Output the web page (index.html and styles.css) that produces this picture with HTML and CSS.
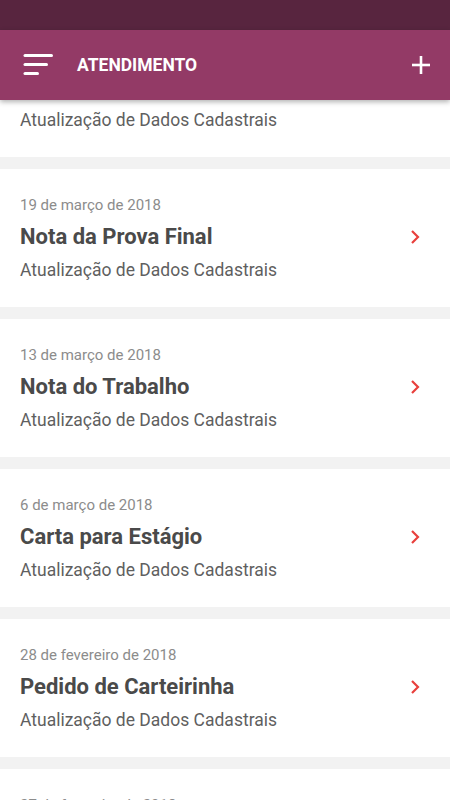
FILE: index.html
```html
<!DOCTYPE html>
<html lang="pt-BR">
<head>
    <meta charset="UTF-8">
    <meta name="viewport" content="width=device-width, initial-scale=1.0">
    <title>Atendimento</title>
    <link rel="stylesheet" href="styles.css">
</head>
<body>
    <!-- Barra de status -->
    <div class="status-bar"></div>

    <!-- Barra superior -->
    <div class="toolbar">
        <svg class="menu-icon" width="32" height="24" viewBox="0 0 32 24">
            <line x1="2" y1="2.5" x2="28.5" y2="2.5" />
            <line x1="2" y1="11.5" x2="23.5" y2="11.5" />
            <line x1="2" y1="20.5" x2="14.5" y2="20.5" />
        </svg>
        <h1>ATENDIMENTO</h1>
        <svg class="add-icon" width="20" height="20" viewBox="0 0 20 20">
            <line x1="10" y1="1" x2="10" y2="19" />
            <line x1="1" y1="10" x2="19" y2="10" />
        </svg>
    </div>

    <!-- Lista de solicitações -->
    <div class="content">
        <div class="list">
            <div class="card">
                <p class="date">20 de março de 2018</p>
                <div class="row">
                    <h2>Declaração de Matrícula</h2>
                    <svg class="chevron" width="10" height="16" viewBox="0 0 10 16"><polyline points="2,2 8,8 2,14" /></svg>
                </div>
                <p class="subject">Atualização de Dados Cadastrais</p>
            </div>
            <div class="card">
                <p class="date">19 de março de 2018</p>
                <div class="row">
                    <h2>Nota da Prova Final</h2>
                    <svg class="chevron" width="10" height="16" viewBox="0 0 10 16"><polyline points="2,2 8,8 2,14" /></svg>
                </div>
                <p class="subject">Atualização de Dados Cadastrais</p>
            </div>
            <div class="card">
                <p class="date">13 de março de 2018</p>
                <div class="row">
                    <h2>Nota do Trabalho</h2>
                    <svg class="chevron" width="10" height="16" viewBox="0 0 10 16"><polyline points="2,2 8,8 2,14" /></svg>
                </div>
                <p class="subject">Atualização de Dados Cadastrais</p>
            </div>
            <div class="card">
                <p class="date">6 de março de 2018</p>
                <div class="row">
                    <h2>Carta para Estágio</h2>
                    <svg class="chevron" width="10" height="16" viewBox="0 0 10 16"><polyline points="2,2 8,8 2,14" /></svg>
                </div>
                <p class="subject">Atualização de Dados Cadastrais</p>
            </div>
            <div class="card">
                <p class="date">28 de fevereiro de 2018</p>
                <div class="row">
                    <h2>Pedido de Carteirinha</h2>
                    <svg class="chevron" width="10" height="16" viewBox="0 0 10 16"><polyline points="2,2 8,8 2,14" /></svg>
                </div>
                <p class="subject">Atualização de Dados Cadastrais</p>
            </div>
            <div class="card">
                <p class="date">27 de fevereiro de 2018</p>
                <div class="row">
                    <h2>Histórico Escolar</h2>
                    <svg class="chevron" width="10" height="16" viewBox="0 0 10 16"><polyline points="2,2 8,8 2,14" /></svg>
                </div>
                <p class="subject">Atualização de Dados Cadastrais</p>
            </div>
        </div>
    </div>
</body>
</html>
```

FILE: styles.css
```css
/* Estilos gerais */
body {
    font-family: Roboto, "Noto Sans", sans-serif;
    margin: 0;
    padding: 0;
    background: #f2f2f2;
    height: 800px;
    overflow: hidden;
    display: flex;
    flex-direction: column;
}

.status-bar {
    height: 30px;
    background: #58253f;
    flex-shrink: 0;
}

/* Barra superior */
.toolbar {
    position: relative;
    z-index: 2;
    height: 70px;
    flex-shrink: 0;
    background: #933a66;
    display: flex;
    align-items: center;
    padding: 0 19px 0 23px;
    box-shadow: 0 2px 5px rgba(0, 0, 0, 0.3);
}

.toolbar h1 {
    flex: 1;
    margin: 0 0 0 22px;
    color: #fff;
    font-size: 17.5px;
    font-weight: 700;
}

.menu-icon line,
.add-icon line {
    stroke: #fff;
    stroke-width: 3;
    stroke-linecap: round;
}

.add-icon line {
    stroke-width: 2.6;
    stroke-linecap: butt;
}

/* Lista */
.content {
    flex: 1;
    overflow: hidden;
}

.list {
    margin-top: -81px;
    display: flex;
    flex-direction: column;
    gap: 12px;
}

.card {
    background: #fff;
    height: 138px;
    box-sizing: border-box;
    padding: 27px 30px 0 20px;
}

.date {
    margin: 0;
    font-size: 15px;
    line-height: 18px;
    color: #8c8c8c;
}

.row {
    display: flex;
    align-items: center;
    justify-content: space-between;
    margin-top: 9px;
}

.row h2 {
    margin: 0;
    font-size: 22px;
    line-height: 28px;
    font-weight: 700;
    color: #4a4a4a;
}

.chevron polyline {
    fill: none;
    stroke: #e8403d;
    stroke-width: 2.2;
}

.subject {
    margin: 8px 0 0;
    font-size: 17.5px;
    line-height: 22px;
    color: #5f5f5f;
}
```
